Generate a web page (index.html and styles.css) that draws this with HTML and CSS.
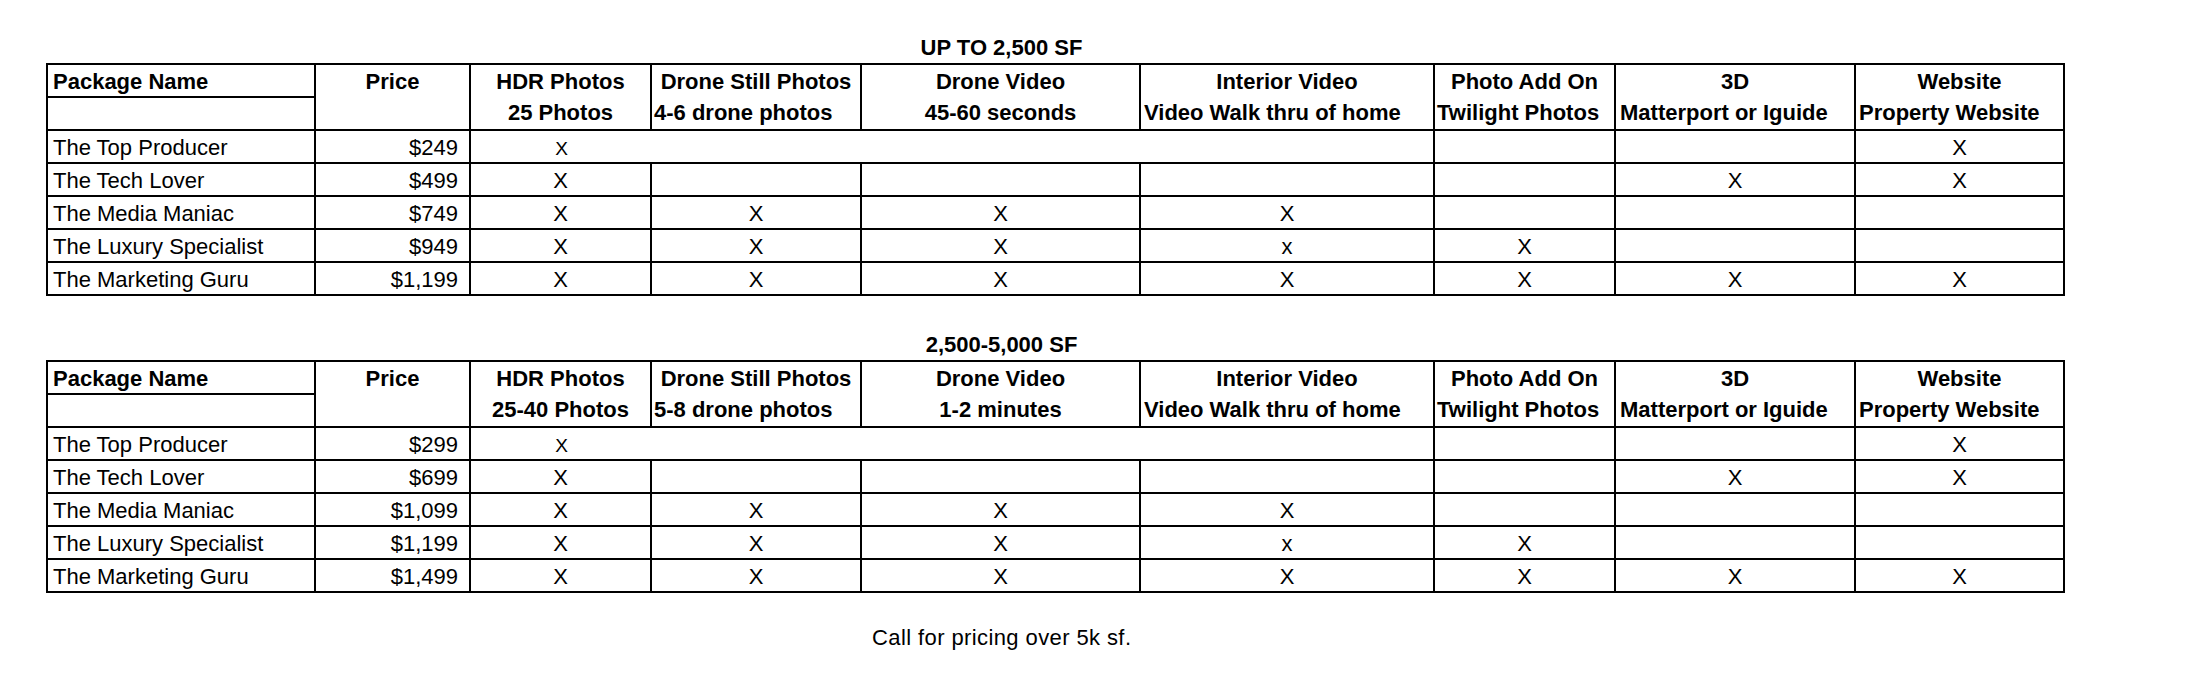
FILE: index.html
```html
<!DOCTYPE html>
<html lang="en">
<head>
<meta charset="utf-8">
<title>Packages</title>
<link rel="stylesheet" href="styles.css">
</head>
<body>
<main class="sheet">
  <section class="block">
    <div class="cols caption-row"><h2 class="caption">UP TO 2,500 SF</h2></div>
    <div class="cols table">
      <div class="c hd name">Package Name</div>
      <div class="c hd tall">Price</div>
      <div class="c hd tall"><span class="ln">HDR Photos</span><span class="ln">25 Photos</span></div>
      <div class="c hd tall"><span class="ln">Drone Still Photos</span><span class="ln lft p2">4-6 drone photos</span></div>
      <div class="c hd tall"><span class="ln">Drone Video</span><span class="ln">45-60 seconds</span></div>
      <div class="c hd tall"><span class="ln">Interior Video</span><span class="ln lft p3">Video Walk thru of home</span></div>
      <div class="c hd tall"><span class="ln">Photo Add On</span><span class="ln lft p2">Twilight Photos</span></div>
      <div class="c hd tall"><span class="ln">3D</span><span class="ln lft p4">Matterport or Iguide</span></div>
      <div class="c hd tall"><span class="ln">Website</span><span class="ln lft p3">Property Website</span></div>
      <div class="c name"></div>

      <div class="c name">The Top Producer</div><div class="c price">$249</div><div class="c open"><span class="sm">X</span></div><div class="c open"></div><div class="c open"></div><div class="c"></div><div class="c"></div><div class="c"></div><div class="c">X</div>
      <div class="c name">The Tech Lover</div><div class="c price">$499</div><div class="c">X</div><div class="c"></div><div class="c"></div><div class="c"></div><div class="c"></div><div class="c">X</div><div class="c">X</div>
      <div class="c name">The Media Maniac</div><div class="c price">$749</div><div class="c">X</div><div class="c">X</div><div class="c">X</div><div class="c">X</div><div class="c"></div><div class="c"></div><div class="c"></div>
      <div class="c name">The Luxury Specialist</div><div class="c price">$949</div><div class="c">X</div><div class="c">X</div><div class="c">X</div><div class="c">x</div><div class="c">X</div><div class="c"></div><div class="c"></div>
      <div class="c name">The Marketing Guru</div><div class="c price">$1,199</div><div class="c">X</div><div class="c">X</div><div class="c">X</div><div class="c">X</div><div class="c">X</div><div class="c">X</div><div class="c">X</div>
    </div>
  </section>

  <section class="block">
    <div class="cols caption-row"><h2 class="caption">2,500-5,000 SF</h2></div>
    <div class="cols table">
      <div class="c hd name">Package Name</div>
      <div class="c hd tall">Price</div>
      <div class="c hd tall"><span class="ln">HDR Photos</span><span class="ln">25-40 Photos</span></div>
      <div class="c hd tall"><span class="ln">Drone Still Photos</span><span class="ln lft p2">5-8 drone photos</span></div>
      <div class="c hd tall"><span class="ln">Drone Video</span><span class="ln">1-2 minutes</span></div>
      <div class="c hd tall"><span class="ln">Interior Video</span><span class="ln lft p3">Video Walk thru of home</span></div>
      <div class="c hd tall"><span class="ln">Photo Add On</span><span class="ln lft p2">Twilight Photos</span></div>
      <div class="c hd tall"><span class="ln">3D</span><span class="ln lft p4">Matterport or Iguide</span></div>
      <div class="c hd tall"><span class="ln">Website</span><span class="ln lft p3">Property Website</span></div>
      <div class="c name"></div>

      <div class="c name">The Top Producer</div><div class="c price">$299</div><div class="c open"><span class="sm">X</span></div><div class="c open"></div><div class="c open"></div><div class="c"></div><div class="c"></div><div class="c"></div><div class="c">X</div>
      <div class="c name">The Tech Lover</div><div class="c price">$699</div><div class="c">X</div><div class="c"></div><div class="c"></div><div class="c"></div><div class="c"></div><div class="c">X</div><div class="c">X</div>
      <div class="c name">The Media Maniac</div><div class="c price">$1,099</div><div class="c">X</div><div class="c">X</div><div class="c">X</div><div class="c">X</div><div class="c"></div><div class="c"></div><div class="c"></div>
      <div class="c name">The Luxury Specialist</div><div class="c price">$1,199</div><div class="c">X</div><div class="c">X</div><div class="c">X</div><div class="c">x</div><div class="c">X</div><div class="c"></div><div class="c"></div>
      <div class="c name">The Marketing Guru</div><div class="c price">$1,499</div><div class="c">X</div><div class="c">X</div><div class="c">X</div><div class="c">X</div><div class="c">X</div><div class="c">X</div><div class="c">X</div>
    </div>
  </section>

  <div class="cols note-row"><p class="note">Call for pricing over 5k sf.</p></div>
</main>
</body>
</html>
```

FILE: styles.css
```css
html, body {
  margin: 0;
  padding: 0;
  background: #ffffff;
}

body {
  font-family: "Liberation Sans", Arial, sans-serif;
  font-size: 22px;
  color: #000000;
}

.sheet {
  padding: 31px 0 0 46px;
}

.cols {
  display: grid;
  grid-template-columns: 268px 155px 181px 210px 279px 294px 181px 240px 209px;
}

.caption-row {
  padding-left: 2px;
  height: 32px;
}

.caption {
  grid-column: 5;
  margin: 0;
  padding-top: 1px;
  font-size: inherit;
  font-weight: 700;
  line-height: 32px;
  text-align: center;
  white-space: nowrap;
}

.block + .block {
  margin-top: 32px;
}

.table {
  width: max-content;
  border-left: 2px solid #000;
  border-top: 2px solid #000;
  grid-auto-rows: 33px;
}

.c {
  box-sizing: border-box;
  border-right: 2px solid #000;
  border-bottom: 2px solid #000;
  padding-top: 1px;
  line-height: 31px;
  text-align: center;
  white-space: nowrap;
  min-width: 0;
}

.hd {
  font-weight: 700;
}

.tall {
  grid-row: span 2;
}

.ln {
  display: block;
}

.lft {
  text-align: left;
}

.p2 { padding-left: 2px; }
.p3 { padding-left: 3px; }
.p4 { padding-left: 4px; }

.name {
  text-align: left;
  padding-left: 5px;
}

.price {
  text-align: right;
  padding-right: 11px;
}

.open {
  border-right: none;
}

.sm {
  font-size: 19px;
}

.note-row {
  padding-left: 2px;
  margin-top: 28px;
}

.note {
  grid-column: 5;
  margin: 0;
  padding-top: 1px;
  padding-left: 10px;
  line-height: 31px;
  letter-spacing: 0.4px;
  white-space: nowrap;
}
```
